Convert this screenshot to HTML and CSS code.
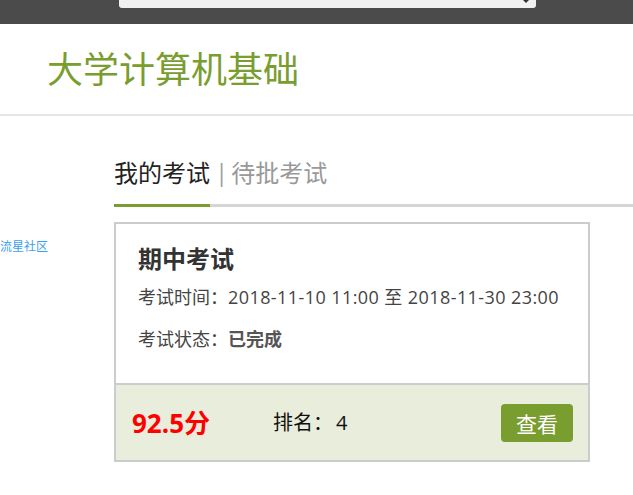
FILE: index.html
```html
<!DOCTYPE html>
<html lang="zh-CN">
<head>
<meta charset="utf-8">
<title>大学计算机基础</title>
<link rel="stylesheet" href="styles.css">
</head>
<body>
<div class="topbar">
  <div class="search"><span class="caret"></span></div>
</div>
<header class="header">
  <h1 class="course-title">大学计算机基础</h1>
</header>
<div class="main">
  <aside class="sidebar">
    <a class="side-link" href="#">流星社区</a>
  </aside>
  <section class="content">
    <nav class="tabs">
      <span class="tab active">我的考试</span>
      <span class="tab-sep">|</span>
      <span class="tab">待批考试</span>
    </nav>
    <div class="exam-card">
      <div class="exam-body">
        <h2 class="exam-title">期中考试</h2>
        <p class="exam-line">考试时间：<span class="date">2018-11-10 11:00 至 2018-11-30 23:00</span></p>
        <p class="exam-line">考试状态：<strong class="status">已完成</strong></p>
      </div>
      <div class="exam-foot">
        <span class="score">92.5分</span>
        <span class="rank">排名：<span class="rank-num">4</span></span>
        <a class="view-btn" href="#">查看</a>
      </div>
    </div>
  </section>
</div>
</body>
</html>
```
FILE: styles.css
```css
* { box-sizing: border-box; }
html, body {
  margin: 0;
  padding: 0;
  background: #fff;
  font-family: "Open Sans", "Noto Sans CJK SC", sans-serif;
  color: #333;
}
.topbar {
  height: 24px;
  background: #4b4b4b;
  padding-left: 119px;
}
.search {
  width: 417px;
  height: 8px;
  background: #f1f1f1;
  border-radius: 0 0 3px 3px;
  position: relative;
}
.caret {
  position: absolute;
  right: 7px;
  top: 0;
  width: 0;
  height: 0;
  border-left: 3px solid transparent;
  border-right: 3px solid transparent;
  border-top: 3px solid #333;
}
.header {
  height: 92px;
  padding: 25px 0 0 47px;
  border-bottom: 2px solid #e5e5e5;
}
.course-title {
  margin: 0;
  font-family: "Noto Sans CJK SC", sans-serif;
  font-weight: normal;
  font-size: 36px;
  line-height: 36px;
  color: #7a9d2f;
}
.main {
  display: flex;
}
.sidebar {
  width: 114px;
  flex: none;
  padding-top: 124px;
}
.side-link {
  display: block;
  font-family: "Noto Sans CJK SC", sans-serif;
  font-size: 12px;
  line-height: 12px;
  color: #3a9ff0;
  text-decoration: none;
}
.content {
  flex: 1;
  padding-top: 44px;
}
.tabs {
  display: flex;
  align-items: flex-start;
  border-bottom: 3px solid #d5d5d5;
  font-family: "Noto Sans CJK SC", sans-serif;
  font-size: 24px;
  line-height: 24px;
}
.tab {
  color: #999;
  padding-bottom: 20px;
}
.tab.active {
  color: #222;
  border-bottom: 3px solid #7a9d2f;
  margin-bottom: -3px;
}
.tab-sep {
  color: #a0a0a0;
  padding: 0 3px 0 5px;
  font-family: "Open Sans", sans-serif;
}
.exam-card {
  width: 476px;
  margin-top: 15px;
  border: 2px solid #ccc;
}
.exam-body {
  padding: 22px 22px 35px;
}
.exam-title {
  margin: 0 0 18px;
  font-family: "Noto Sans CJK SC", sans-serif;
  font-weight: bold;
  font-size: 24px;
  line-height: 24px;
  color: #333;
}
.exam-line {
  margin: 0;
  font-size: 18px;
  line-height: 18px;
  color: #444;
}
.exam-line + .exam-line {
  margin-top: 24px;
}
.date {
  letter-spacing: 0.42px;
}
.status {
  color: #555;
  font-weight: bold;
}
.exam-foot {
  height: 75px;
  border-top: 2px solid #ccc;
  background: #e9eddb;
  display: flex;
  align-items: center;
  padding: 0 15px 0 16px;
  box-sizing: content-box;
}
.score {
  width: 141px;
  flex: none;
  color: #ff0000;
  font-weight: bold;
  font-size: 26px;
  line-height: 26px;
}
.rank {
  flex: 1;
  font-size: 20px;
  line-height: 20px;
  color: #111;
}
.rank-num {
  margin-left: 3px;
}
.view-btn {
  width: 72px;
  height: 38px;
  border-radius: 4px;
  background: #7a9d2f;
  color: #fff;
  font-family: "Noto Sans CJK SC", sans-serif;
  font-size: 21px;
  line-height: 38px;
  text-align: center;
  text-decoration: none;
}
```
